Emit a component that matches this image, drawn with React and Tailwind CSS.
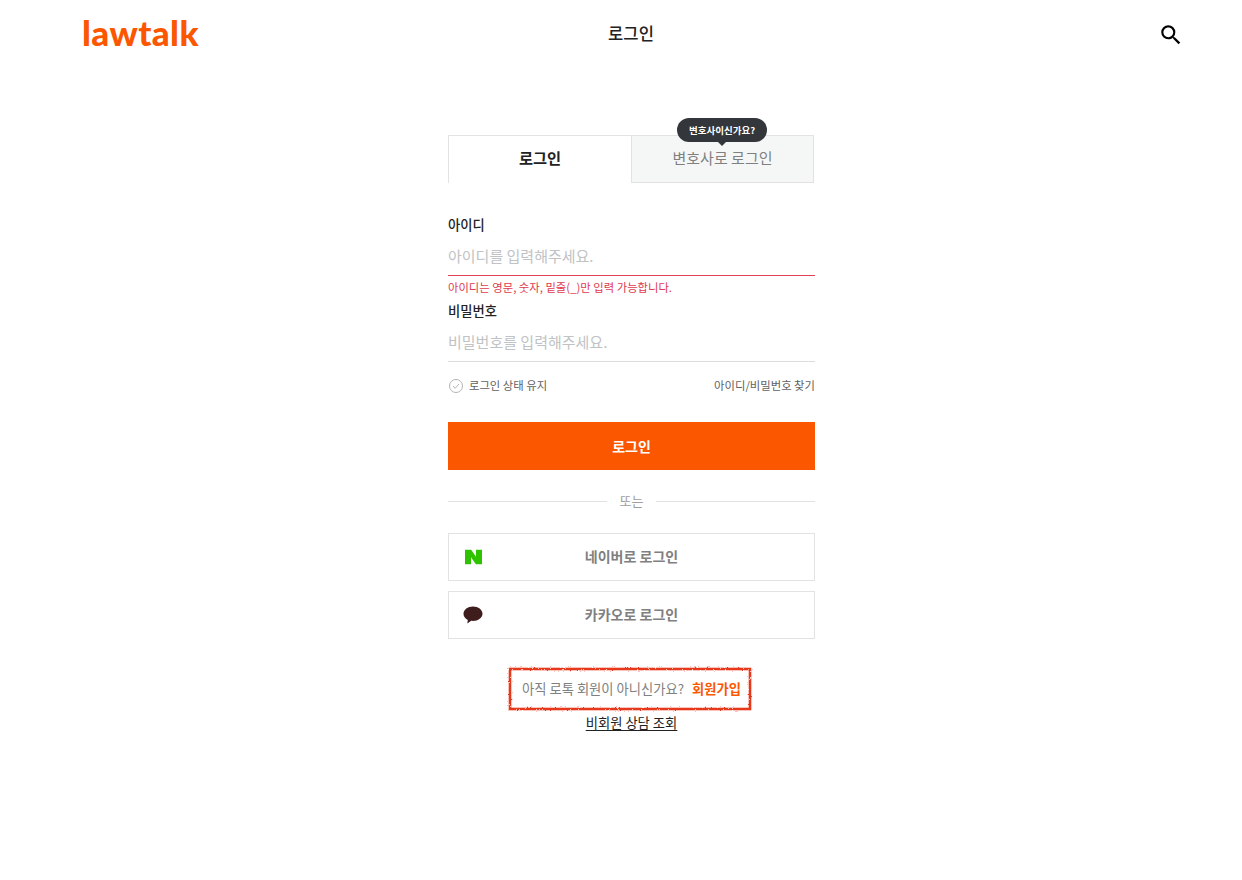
import React from "react";

const FONT = { fontFamily: '"Noto Sans CJK KR", "Noto Sans", sans-serif' };

function SearchIcon() {
  return (
    <svg width="26" height="26" viewBox="0 0 24 24" className="block" fill="#000">
      <path d="M15.5 14h-.79l-.28-.27A6.471 6.471 0 0 0 16 9.500 6.500 6.500 0 1 0 9.500 16c1.610 0 3.090-.59 4.230-1.570l.27.28v.79l5 4.990L20.490 19l-4.990-5zm-6 0C7.010 14 5 11.990 5 9.500S7.010 5 9.500 5 14 7.010 14 9.500 11.990 14 9.500 14z" />
    </svg>
  );
}

function NaverIcon() {
  return (
    <svg width="17" height="15" viewBox="0 0 17 15" className="block">
      <path d="M0 0h6l5 7.300V0h6v15h-6L6 7.700V15H0z" fill="#2fc200" />
    </svg>
  );
}

function KakaoIcon() {
  return (
    <svg width="20" height="18" viewBox="0 0 20 18" className="block -ml-[2px]">
      <path
        d="M10 0.500c5.200 0 9.500 3.200 9.500 7.200s-4.300 7.200-9.500 7.200c-.6 0-1.200 0-1.800-.1L4.300 17.500l.5-3.600C2.100 12.600.5 10.300.5 7.700.5 3.700 4.800.5 10 .5z"
        fill="#3f1d1d"
      />
    </svg>
  );
}

function RoughBorder() {
  return (
    <svg width="246" height="46" className="absolute -left-[2px] -top-[2px] pointer-events-none">
      <filter id="rough" x="-5%" y="-20%" width="110%" height="140%">
        <feTurbulence type="fractalNoise" baseFrequency="0.6" numOctaves="3" seed="7" />
        <feDisplacementMap in="SourceGraphic" scale="2.500" xChannelSelector="R" yChannelSelector="G" />
      </filter>
      <rect x="3" y="3" width="240" height="40" fill="none" stroke="#e8391c" strokeWidth="2.600" filter="url(#rough)" />
    </svg>
  );
}

function Field({ label, placeholder, error }) {
  return (
    <div>
      <label className="block text-[13.3px] leading-[20px] font-medium text-[#222]">{label}</label>
      <input
        readOnly
        placeholder={placeholder}
        className="block w-full h-[39px] mt-px pb-[1px] bg-white text-[15px] outline-none placeholder:text-[#bfc3c5]"
      />
      {error ? <div className="h-px bg-[#e2405a]" /> : <div className="h-px bg-[#dcdcdc]" />}
    </div>
  );
}

function SocialButton({ icon, children }) {
  return (
    <button className="relative flex items-center justify-center w-full h-[48px] border border-[#e2e2e2] bg-white text-[14px] font-bold text-[#808080]">
      <span className="absolute left-[16px] top-1/2 -translate-y-1/2">{icon}</span>
      <span className="-mt-[2px]">{children}</span>
    </button>
  );
}

export default function App() {
  return (
    <div className="bg-white min-h-screen" style={FONT}>
      <header className="grid grid-cols-[1fr_auto_1fr] items-center h-[66px] pl-[82px] pr-[62px]">
        <a
          className="-mt-[2px] text-[35px] leading-none font-black tracking-[0.4px] text-[#fb5700]"
          style={{ fontFamily: '"Lato", sans-serif' }}
        >
          lawtalk
        </a>
        <h1 className="text-[16.600px] font-medium text-[#222]">로그인</h1>
        <div className="justify-self-end -mr-[4px] mt-[3px]">
          <SearchIcon />
        </div>
      </header>

      <main className="w-[367px] ml-[448px] pt-[69px]">
        <div className="relative flex h-[48px] w-[366px]">
          <div className="flex items-center justify-center w-[183px] pb-[4px] border-t border-l border-[#e2e2e2] text-[15.300px] font-bold text-[#222]">
            로그인
          </div>
          <div className="flex items-center justify-center w-[183px] pb-[2px] border border-[#e2e2e2] bg-[#f5f7f7] text-[15px] text-[#808080]">
            변호사로 로그인
          </div>
          <div className="absolute left-[229px] top-[-17px] flex items-center justify-center w-[90px] h-[24px] rounded-full bg-[#33363a] text-[9.500px] font-bold text-white">
            변호사이신가요?
            <span className="absolute left-1/2 -translate-x-1/2 top-[23px] w-0 h-0 border-x-[5px] border-x-transparent border-t-[5px] border-t-[#33363a]" />
          </div>
        </div>

        <div className="mt-[32px]">
          <Field label="아이디" placeholder="아이디를 입력해주세요." error />
          <p className="mt-[2px] text-[11.350px] leading-[18px] text-[#e0394f]">
            아이디는 영문, 숫자, 밑줄(_)만 입력 가능합니다.
          </p>
        </div>

        <div className="mt-[5px]">
          <Field label="비밀번호" placeholder="비밀번호를 입력해주세요." />
        </div>

        <div className="flex items-center justify-between mt-[14px] h-[20px] text-[11.350px] text-[#616161]">
          <span className="flex items-center gap-[5px]">
            <svg width="16" height="16" viewBox="0 0 16 16" fill="none" className="block">
              <circle cx="8" cy="8" r="6.500" stroke="#b5b5b5" />
              <path d="M5 8.200l2.200 2.100L11 6" stroke="#b5b5b5" />
            </svg>
            로그인 상태 유지
          </span>
          <span>아이디/비밀번호 찾기</span>
        </div>

        <button className="block w-full h-[48px] mt-[26px] bg-[#fb5700] text-[14px] font-bold text-white">
          로그인
        </button>

        <div className="flex items-center gap-[13px] mt-[21px] h-[20px] text-[13px] text-[#9e9e9e]">
          <span className="flex-1 h-px bg-[#e2e2e2]" />
          또는
          <span className="flex-1 h-px bg-[#e2e2e2]" />
        </div>

        <div className="flex flex-col gap-[10px] mt-[22px]">
          <SocialButton icon={<NaverIcon />}>네이버로 로그인</SocialButton>
          <SocialButton icon={<KakaoIcon />}>카카오로 로그인</SocialButton>
        </div>

        <div className="flex flex-col items-center mt-[29px]">
          <div className="relative flex items-center justify-center gap-[8px] w-[242px] h-[42px] -ml-[3px] pl-[3px] pb-px text-[13.300px] text-[#808080]">
            <RoughBorder />
            아직 로톡 회원이 아니신가요?
            <span className="font-bold text-[#fb5700]">회원가입</span>
          </div>
          <a className="mt-[3px] text-[13.300px] leading-[20px] text-[#222] underline underline-offset-2">
            비회원 상담 조회
          </a>
        </div>
      </main>
    </div>
  );
}
